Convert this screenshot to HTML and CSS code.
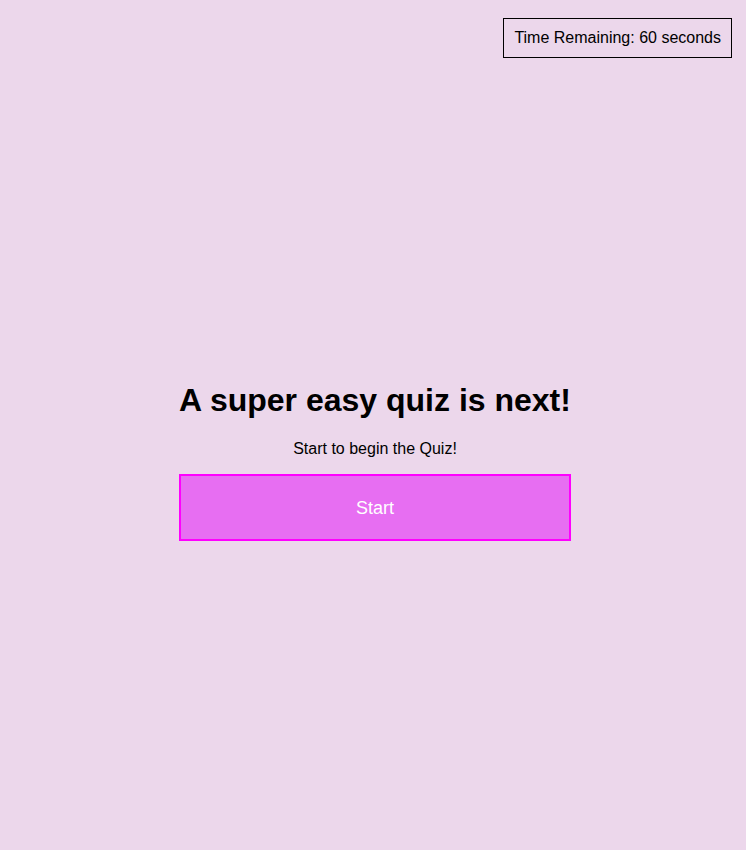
FILE: index.html
```html
<!DOCTYPE html>
<html lang="en">
<head>
<meta charset="utf-8">
<title>Quiz</title>
<link rel="stylesheet" href="styles.css">
</head>
<body>
<div class="timer">Time Remaining: 60 seconds</div>
<main class="page">
  <section class="intro">
    <h1 class="title">A super easy quiz is next!</h1>
    <p class="subtitle">Start to begin the Quiz!</p>
    <button class="start-btn" type="button">Start</button>
  </section>
</main>
</body>
</html>
```

FILE: styles.css
```css
html, body {
  margin: 0;
  padding: 0;
}
body {
  background: #ecd7eb;
  font-family: "Liberation Sans", Arial, sans-serif;
  color: #000;
  min-height: 850px;
  position: relative;
}
.timer {
  position: absolute;
  top: 18px;
  right: 14px;
  border: 1px solid #000;
  padding: 10px 10px;
  font-size: 16px;
  line-height: 18px;
}
.page {
  min-height: 850px;
  box-sizing: border-box;
  padding-top: 74px;
  padding-left: 4px;
  display: flex;
  flex-direction: column;
  align-items: center;
  justify-content: center;
}
.intro {
  width: 392px;
  display: flex;
  flex-direction: column;
  align-items: stretch;
  text-align: center;
  margin-bottom: 2px;
}
.title {
  margin: 0;
  font-size: 32px;
  line-height: 37px;
  font-weight: bold;
  white-space: nowrap;
}
.subtitle {
  margin: 21px 0 16px;
  font-size: 16px;
  line-height: 18px;
}
.start-btn {
  height: 67px;
  border: 2px solid #ff00ff;
  background: #e76ef2;
  color: #fff;
  font-family: "Liberation Sans", Arial, sans-serif;
  font-size: 18px;
  padding: 2px 0 0;
  margin: 0;
}
```
